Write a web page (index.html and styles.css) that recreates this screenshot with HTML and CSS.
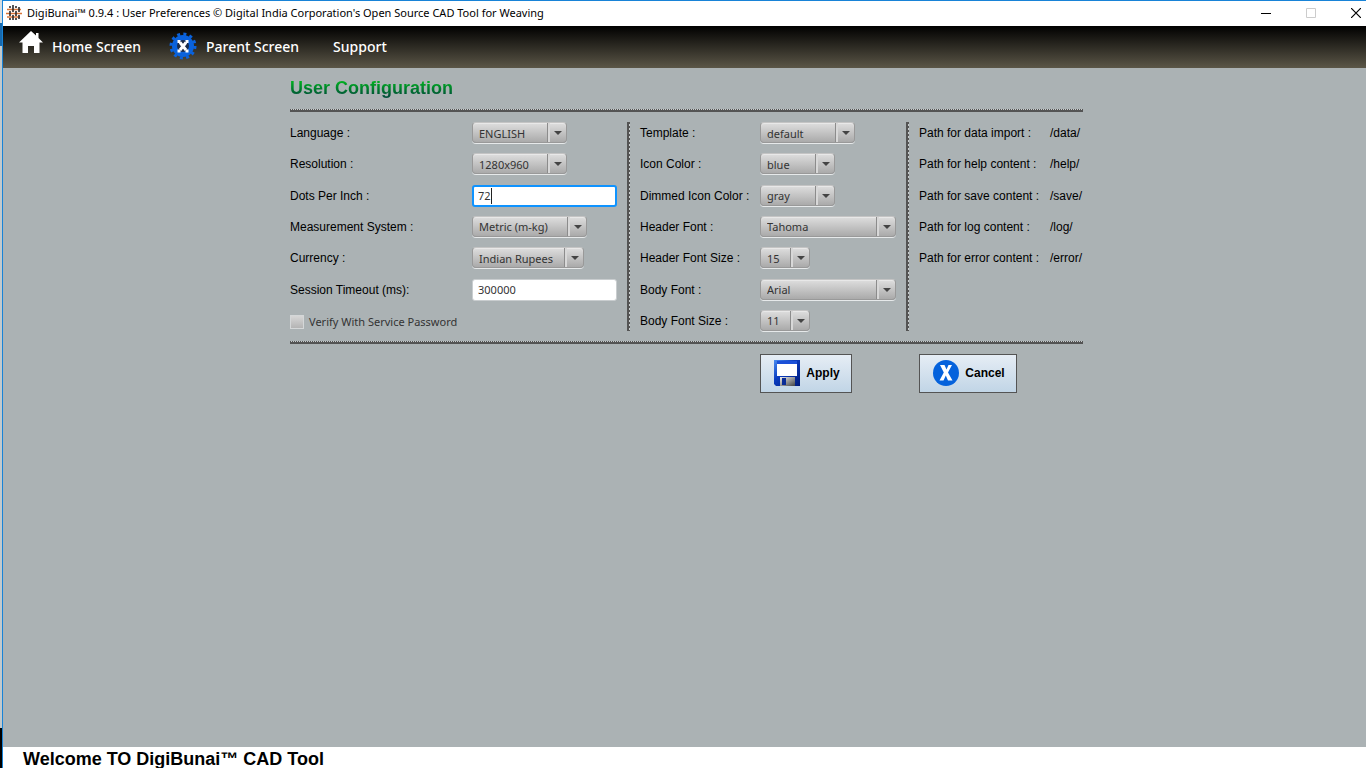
FILE: index.html
```html
<!DOCTYPE html>
<html lang="en">
<head>
    <meta charset="UTF-8">
    <meta name="viewport" content="width=device-width, initial-scale=1.0">
    <title>DigiBunai™ 0.9.4 : User Preferences</title>
    <link rel="stylesheet" href="styles.css">
</head>
<body>
    <div class="window">
        <header class="titlebar">
            <svg class="app-icon" width="16" height="16" viewBox="0 0 16 16">
                <path d="M1 4.5h14M0 8.5h16M1 12h13" stroke="#d9763a" stroke-width="1.6" fill="none"/>
                <path d="M4 1v2M4 6v5M4 13v2M7 0v7M7 10v5M10 1v2M10 6v5M10 13v2M13 2v5M13 10v4" stroke="#2b2b2b" stroke-width="1.6" fill="none"/>
            </svg>
            <span class="caption">DigiBunai™ 0.9.4 : User Preferences © Digital India Corporation's Open Source CAD Tool for Weaving</span>
            <div class="window-buttons">
                <button type="button" aria-label="Minimize">
                    <svg width="10" height="10" viewBox="0 0 10 10"><path d="M0 5.5h10" stroke="#000"/></svg>
                </button>
                <button type="button" aria-label="Maximize" disabled>
                    <svg width="10" height="10" viewBox="0 0 10 10"><path d="M.5 .5h9v9h-9z" stroke="#ccc" fill="none"/></svg>
                </button>
                <button type="button" aria-label="Close">
                    <svg width="10" height="10" viewBox="0 0 10 10"><path d="M0 0l10 10M10 0L0 10" stroke="#000" stroke-width="1.2"/></svg>
                </button>
            </div>
        </header>

        <nav class="menubar">
            <a href="#home">
                <svg class="home-icon" width="24" height="22" viewBox="0 0 24 22"><path d="M12 0l5 4.600V2h2.500v5L24 11.500h-3.500V22H15v-7H9v7H3.500V11.500H0z" fill="#fff"/></svg>
                Home Screen
            </a>
            <a href="#parent">
                <svg width="28" height="28" viewBox="0 0 28 28">
                    <circle cx="14" cy="14" r="12" fill="none" stroke="#0a62dc" stroke-width="3" stroke-dasharray="3 3.283"/>
                    <circle cx="14" cy="14" r="11" fill="#0a62dc"/>
                    <circle cx="14" cy="14" r="6" fill="#1c2c48"/>
                    <path d="M11 10.500l6 7.500M17 10.500l-6 7.500" stroke="#fff" stroke-width="3"/>
                    <path d="M8.500 8h3v3h-3zM16.500 8h3v3h-3zM8.500 17.500h3v3h-3zM16.500 17.500h3v3h-3z" fill="#fff"/>
                </svg>
                Parent Screen
            </a>
            <a href="#support" class="plain">Support</a>
        </nav>

        <main>
            <form class="config">
                <h1>User Configuration</h1>
                <div class="rule"></div>

                <div class="fields general">
                    <label for="language">Language :</label>
                    <span class="combo md"><select id="language"><option>ENGLISH</option></select></span>
                    <label for="resolution">Resolution :</label>
                    <span class="combo md"><select id="resolution"><option>1280x960</option></select></span>
                    <label for="dpi">Dots Per Inch :</label>
                    <span class="text editing"><input type="text" id="dpi" value="72"></span>
                    <label for="measurement">Measurement System :</label>
                    <span class="combo lg"><select id="measurement"><option>Metric (m-kg)</option></select></span>
                    <label for="currency">Currency :</label>
                    <span class="combo ml"><select id="currency"><option>Indian Rupees</option></select></span>
                    <label for="timeout">Session Timeout (ms):</label>
                    <span class="text"><input type="text" id="timeout" value="300000"></span>
                    <label class="check"><input type="checkbox"> Verify With Service Password</label>
                </div>

                <div class="divider"></div>

                <div class="fields look">
                    <label for="template">Template :</label>
                    <span class="combo md"><select id="template"><option>default</option></select></span>
                    <label for="icon-color">Icon Color :</label>
                    <span class="combo sm"><select id="icon-color"><option>blue</option></select></span>
                    <label for="dimmed-color">Dimmed Icon Color :</label>
                    <span class="combo sm"><select id="dimmed-color"><option>gray</option></select></span>
                    <label for="header-font">Header Font :</label>
                    <span class="combo xl"><select id="header-font"><option>Tahoma</option></select></span>
                    <label for="header-size">Header Font Size :</label>
                    <span class="combo xs"><select id="header-size"><option>15</option></select></span>
                    <label for="body-font">Body Font :</label>
                    <span class="combo xl"><select id="body-font"><option>Arial</option></select></span>
                    <label for="body-size">Body Font Size :</label>
                    <span class="combo xs"><select id="body-size"><option>11</option></select></span>
                </div>

                <div class="divider"></div>

                <div class="fields paths">
                    <span>Path for data import :</span><span>/data/</span>
                    <span>Path for help content :</span><span>/help/</span>
                    <span>Path for save content :</span><span>/save/</span>
                    <span>Path for log content :</span><span>/log/</span>
                    <span>Path for error content :</span><span>/error/</span>
                </div>

                <div class="rule"></div>

                <button type="button" class="action apply">
                    <svg width="28" height="28" viewBox="0 0 28 28">
                        <defs>
                            <linearGradient id="disk" x1="0" y1="0" x2="1" y2="1"><stop offset="0" stop-color="#4a8cf0"/><stop offset=".4" stop-color="#0a3cc0"/><stop offset="1" stop-color="#001a78"/></linearGradient>
                            <linearGradient id="shutter" x1="0" y1="0" x2="1" y2="1"><stop offset="0" stop-color="#eee"/><stop offset="1" stop-color="#444"/></linearGradient>
                        </defs>
                        <path d="M1 1h26v26H3l-2-2z" fill="url(#disk)"/>
                        <path d="M4 2h20v3H4z" fill="#1b50d8"/>
                        <path d="M4 5h20v12H4z" fill="#fff"/>
                        <path d="M7 18h15v9H7z" fill="url(#shutter)"/>
                        <path d="M9 19h4v7H9z" fill="#0a2c98"/>
                    </svg>
                    Apply
                </button>
                <button type="button" class="action cancel">
                    <svg width="28" height="28" viewBox="0 0 28 28">
                        <circle cx="14" cy="14" r="13" fill="#0562dc"/>
                        <path d="M8 6h4.500l2 4.500L16.500 6H20l-4 7.500 4.500 8H16l-2.200-5-2.300 5H7.500l4.300-8z" fill="#fff"/>
                    </svg>
                    Cancel
                </button>
            </form>
        </main>

        <footer>Welcome TO DigiBunai™ CAD Tool</footer>
    </div>
</body>
</html>
```
FILE: styles.css
```css
:root {
    --frame: #1883d7;
    --surface: #abb2b4;
    --line: #545454;
    --ui: "Noto Sans", "Open Sans", sans-serif;
    --body: "Liberation Sans", Arial, sans-serif;
}

* {
    box-sizing: border-box;
}

body {
    margin: 0;
    padding-left: 2px;
    background: linear-gradient(#d5dde2 23px, #1769ae 23px, #1769ae 46px, #c2c9cc 46px, #c2c9cc calc(100% - 40px), #000 calc(100% - 40px));
    font-family: var(--body);
    font-size: 12px;
    color: #000;
}

.window {
    display: flex;
    flex-direction: column;
    min-height: 100vh;
    border-top: 1px solid var(--frame);
    border-left: 1px solid var(--frame);
    background: var(--surface);
}

/* title bar */
.titlebar {
    display: flex;
    align-items: center;
    gap: 5px;
    height: 25px;
    padding: 0 5px 2px 3px;
    background: #fff;
    font-family: var(--ui);
    font-size: 11px;
}

.caption {
    flex: 1;
    white-space: nowrap;
}

.window-buttons {
    display: flex;
    gap: 35px;
}

.window-buttons button {
    display: flex;
    padding: 0;
    border: 0;
    background: none;
}

/* menu */
.menubar {
    display: flex;
    align-items: center;
    gap: 28px;
    height: 42px;
    padding: 0 16px 2px;
    background: linear-gradient(#000, #5b5647);
    font-family: var(--ui);
    font-size: 14px;
    font-weight: 500;
}

.menubar a {
    display: flex;
    align-items: center;
    gap: 9px;
    color: #fff;
    text-decoration: none;
}

.menubar .plain {
    padding-left: 6px;
}

.home-icon {
    margin-bottom: 8px;
}

/* form */
main {
    flex: 1;
    padding: 9px 0 0 4px;
}

.config {
    display: grid;
    grid-template-columns: 327px 3px 256px 3px 164px;
    gap: 10px;
    justify-content: center;
}

h1 {
    grid-column: 1 / -1;
    margin: 0;
    font-size: 18px;
    line-height: 22px;
    background: linear-gradient(#00b020 20%, #005038 85%);
    -webkit-background-clip: text;
    background-clip: text;
    color: transparent;
}

.rule {
    grid-column: 1 / -1;
    height: 3px;
    border-bottom: 2px solid var(--line);
    background: repeating-linear-gradient(90deg, var(--line) 0 1px, #c8cccd 1px 2px);
}

.divider {
    border-left: 2px solid var(--line);
    background: repeating-linear-gradient(var(--line) 0 2px, #c8cccd 2px 4px);
}

.fields {
    display: grid;
    grid-template-rows: repeat(7, 1fr);
    row-gap: 9px;
    height: 210px;
    margin-bottom: -1px;
    align-items: center;
    white-space: nowrap;
}

.general {
    grid-template-columns: 182px 145px;
}

.look {
    grid-template-columns: 120px 136px;
}

.paths {
    grid-template-columns: 131px 33px;
}

/* drop-downs */
.combo {
    position: relative;
    height: 22px;
}

.combo select {
    appearance: none;
    width: 100%;
    height: 21px;
    padding: 1px 6px 0;
    border: 1px solid #999;
    border-top-color: #c4c4c4;
    border-radius: 4px;
    background: linear-gradient(#dedede, #aaa);
    box-shadow: inset 0 1px 0 #e8e8e8, 0 1px 0 #e6e9ea;
    font-family: var(--ui);
    font-size: 11px;
    color: #333;
}

.combo::before {
    content: "";
    position: absolute;
    top: 1px;
    right: 17px;
    width: 2px;
    height: 19px;
    border-left: 1px solid #8c8c8c;
    background: #d8d8d8;
}

.combo::after {
    content: "";
    position: absolute;
    top: 9px;
    right: 5px;
    border: 4px solid transparent;
    border-top-color: #444;
    border-bottom: 0;
}

.xs { width: 50px; }
.sm { width: 75px; }
.md { width: 95px; }
.ml { width: 112px; }
.lg { width: 115px; }
.xl { width: 136px; }

/* text boxes */
.text {
    position: relative;
    height: 22px;
}

.text input {
    width: 100%;
    height: 22px;
    padding: 0 5px;
    border: 1px solid #c9cdcf;
    border-radius: 3px;
    background: #fff;
    font-family: var(--ui);
    font-size: 11px;
    color: #333;
}

.editing input {
    border: 2px solid #0f93ff;
    padding: 0 4px;
}

.editing::after {
    content: "";
    position: absolute;
    top: 3px;
    left: 19px;
    width: 1px;
    height: 16px;
    background: #222;
}

.check {
    grid-column: 1 / -1;
    display: flex;
    align-items: center;
    gap: 5px;
    padding-top: 2px;
    font-family: var(--ui);
    font-size: 11px;
    color: #333;
}

.check input {
    appearance: none;
    width: 14px;
    height: 14px;
    margin: 0;
    border: 1px solid #d4d7d8;
    background: linear-gradient(#d6d6d6, #b4b4b4);
}

/* buttons */
.action {
    display: flex;
    align-items: center;
    justify-content: center;
    gap: 5px;
    height: 39px;
    padding: 0 0 2px 1px;
    border: 1px solid var(--line);
    background: linear-gradient(#e6edf5, #c1d5e6);
    font-family: var(--body);
    font-size: 12px;
    font-weight: bold;
    color: #000;
}

.apply {
    grid-column: 3;
    width: 92px;
    margin-left: 120px;
}

.cancel {
    grid-column: 5;
    width: 98px;
}

footer {
    height: 21px;
    padding-left: 20px;
    background: #fff;
    font-size: 18px;
    font-weight: bold;
    line-height: 25px;
    overflow: hidden;
}
```
